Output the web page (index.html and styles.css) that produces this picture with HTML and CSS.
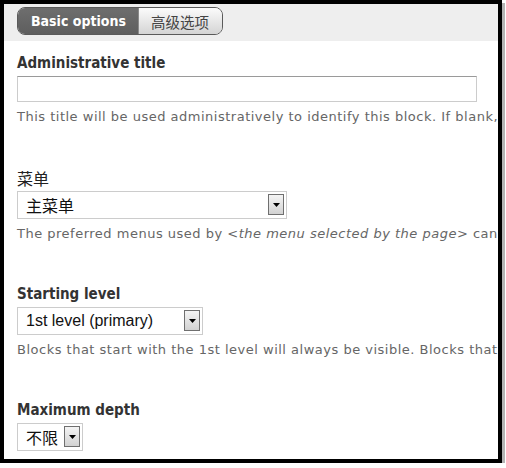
FILE: index.html
```html
<!DOCTYPE html>
<html>
<head>
<meta charset="utf-8">
<link rel="stylesheet" href="styles.css">
</head>
<body>
<div class="frame">
  <div class="tabbar">
    <div class="tabs">
      <span class="tab tab-active">Basic options</span>
      <span class="tab tab-cjk">高级选项</span>
    </div>
  </div>
  <div class="content">
    <div class="item item-first">
      <div class="label">Administrative title</div>
      <div class="textinput"></div>
      <div class="desc">This title will be used administratively to identify this block. If blank, the regular title will be used.</div>
    </div>
    <div class="item">
      <div class="label label-cjk">菜单</div>
      <div class="select select-menu">
        <span class="select-text">主菜单</span>
        <span class="select-btn"><svg width="7" height="4" viewBox="0 0 7 4"><path d="M0 0H7L3.5 4Z" fill="#000"/></svg></span>
      </div>
      <div class="desc">The preferred menus used by <em>&lt;the menu selected by the page&gt;</em> can be customized on the menu settings page.</div>
    </div>
    <div class="item">
      <div class="label">Starting level</div>
      <div class="select select-level">
        <span class="select-text">1st level (primary)</span>
        <span class="select-btn"><svg width="7" height="4" viewBox="0 0 7 4"><path d="M0 0H7L3.5 4Z" fill="#000"/></svg></span>
      </div>
      <div class="desc">Blocks that start with the 1st level will always be visible. Blocks that start with the 2nd level or deeper will only be visible when the trail to the active menu item is in the block's menu tree.</div>
    </div>
    <div class="item">
      <div class="label">Maximum depth</div>
      <div class="select select-depth">
        <span class="select-text">不限</span>
        <span class="select-btn"><svg width="7" height="4" viewBox="0 0 7 4"><path d="M0 0H7L3.5 4Z" fill="#000"/></svg></span>
      </div>
    </div>
  </div>
</div>
</body>
</html>
```

FILE: styles.css
```css
html, body {
  margin: 0;
  padding: 0;
  background: #fff;
}

.frame {
  width: 494px;
  height: 455px;
  border: 4px solid #000;
  box-shadow: 3px 3px 0 #b4b4b4;
  overflow: hidden;
  background: #fff;
}

.tabbar {
  height: 37px;
  box-sizing: border-box;
  background: #eeeeee;
  padding: 3px 0 0 13px;
}

.tabs {
  display: inline-flex;
  height: 28px;
  box-sizing: border-box;
  border: 1px solid #5a5a5a;
  border-radius: 8px;
  overflow: hidden;
}

.tab {
  display: flex;
  align-items: center;
  height: 100%;
  box-sizing: border-box;
}

.tab-active {
  width: 120px;
  padding-left: 13px;
  background: linear-gradient(#6e6e6e, #5e5e5e);
  color: #fff;
  font-family: "DejaVu Sans Condensed", "DejaVu Sans", sans-serif;
  font-stretch: condensed;
  font-weight: bold;
  font-size: 14px;
}

.tab-cjk {
  width: 84px;
  padding-left: 12px;
  background: linear-gradient(#fbfbfb, #d4d4d4);
  border-left: 1px solid #8a8a8a;
  color: #444;
  font-family: "Noto Sans CJK SC", sans-serif;
  font-size: 14.5px;
}

.content {
  padding: 13px 0 0 13px;
  width: 900px;
}

.item {
  margin-bottom: 43px;
}

.item-first {
  margin-bottom: 44px;
}

.label {
  height: 18px;
  line-height: 18px;
  margin-bottom: 4px;
  color: #333;
  font-family: "DejaVu Sans Condensed", "DejaVu Sans", sans-serif;
  font-stretch: condensed;
  font-weight: bold;
  font-size: 15px;
}

.label-cjk {
  font-family: "Noto Sans CJK SC", sans-serif;
  font-weight: normal;
  font-size: 16px;
  color: #222;
}

.textinput {
  width: 460px;
  height: 26px;
  box-sizing: border-box;
  border: 1px solid #cccccc;
  border-top-color: #9a9a9a;
}

.desc {
  margin-top: 7px;
  height: 16px;
  line-height: 16px;
  white-space: nowrap;
  color: #666;
  font-family: "DejaVu Sans", sans-serif;
  font-size: 13px;
  letter-spacing: 0.5px;
}

.desc em {
  font-style: italic;
}

.select {
  display: flex;
  align-items: center;
  justify-content: space-between;
  height: 28px;
  box-sizing: border-box;
  border: 1px solid #cccccc;
  padding: 2px 2px 3px 8px;
}

.select-menu { width: 270px; }
.select-level { width: 186px; }
.select-depth { width: 66px; }

.select-text {
  color: #111;
  font-family: "Liberation Sans", "Noto Sans CJK SC", sans-serif;
  font-size: 16px;
}

.select-btn {
  display: flex;
  align-items: center;
  justify-content: center;
  width: 16px;
  height: 21px;
  box-sizing: border-box;
  border: 1px solid #6f6f6f;
  background: linear-gradient(#f4f4f4, #d2d2d2);
  padding-top: 1px;
}
```
